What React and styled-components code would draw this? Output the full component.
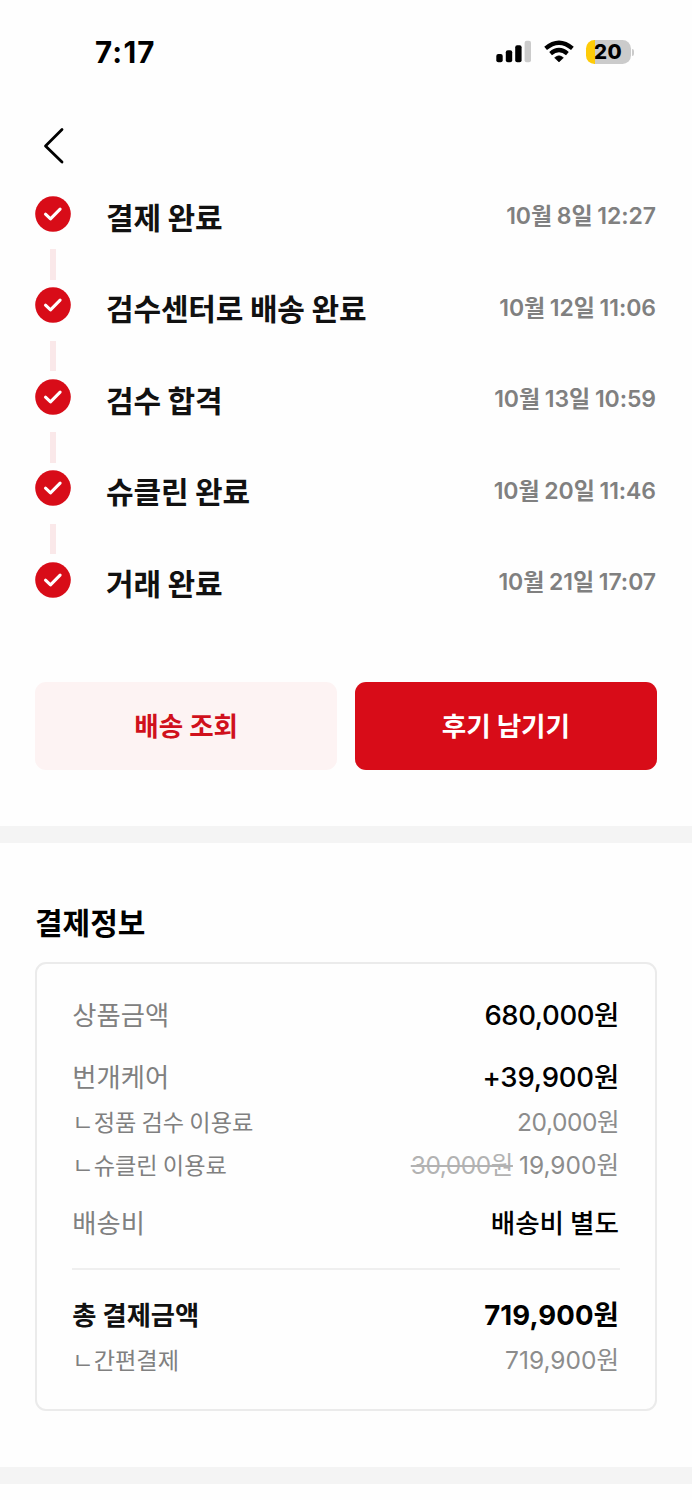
import React from "react";
import styled, { createGlobalStyle } from "styled-components";

const Global = createGlobalStyle`
  * { box-sizing: border-box; }
  body { margin: 0; background: #fefefe; }
`;

const KR = `"Noto Sans CJK KR", "Noto Sans", sans-serif`;
const NUM = `Inter, "Noto Sans CJK KR", sans-serif`;

const Screen = styled.div`
  width: 692px;
  height: 1500px;
  overflow: hidden;
  background: #fefefe;
  color: #111;
  font-family: ${KR};
  white-space: nowrap;
`;

const StatusBar = styled.header`
  display: flex;
  justify-content: space-between;
  align-items: center;
  height: 104px;
  padding: 0 58px 0 95px;
`;

const Clock = styled.div`
  font: 750 29.5px/34px Inter, sans-serif;
  letter-spacing: 1.2px;
  color: #000;
`;

const Indicators = styled.div`
  display: flex;
  align-items: center;
`;

const SignalIcon = styled.svg`
  width: 35px;
  height: 24px;
  margin-right: 13px;
`;

const WifiIcon = styled.svg`
  width: 30px;
  height: 24px;
  margin-right: 12px;
`;

const Battery = styled.div`
  width: 45px;
  height: 24px;
  border-radius: 8.5px;
  background: linear-gradient(to right, #fecb08 9px, #cbcbcb 9px);
  color: #000;
  font: 800 20.5px/24px Inter, sans-serif;
  letter-spacing: 0.4px;
  text-align: center;
`;

const BatteryTip = styled.div`
  width: 2px;
  height: 7px;
  margin-left: 1.5px;
  border-radius: 0 3px 3px 0;
  background: #cbcbcb;
`;

const NavBar = styled.nav`
  height: 91.5px;
  padding: 22px 0 0 40px;
`;

const Chevron = styled.svg`
  display: block;
  width: 28px;
  height: 40px;
`;

const Steps = styled.ol`
  list-style: none;
  margin: 0;
  padding: 0 36px 0 35px;
  height: 486px;
`;

const Step = styled.li`
  display: flex;
  height: 91.5px;
`;

const Marker = styled.div`
  display: flex;
  flex-direction: column;
  align-items: center;
  gap: 17.5px;
  width: 36px;
  margin-right: 35px;
`;

const CheckIcon = styled.svg`
  display: block;
  width: 36px;
  height: 36px;
`;

const Connector = styled.div`
  width: 5.5px;
  height: 30.5px;
  background: #fae8e9;
`;

const StepName = styled.div`
  flex: 1;
  margin-top: 2px;
  font-weight: 600;
  font-size: 30px;
  line-height: 36px;
  letter-spacing: -0.15px;
`;

const StepDate = styled.time`
  margin-top: 2.5px;
  font: 600 23px/36px ${NUM};
  letter-spacing: -0.06px;
  word-spacing: -1px;
  color: #808080;
`;

const Actions = styled.div`
  display: grid;
  grid-template-columns: 1fr 1fr;
  gap: 17.5px;
  padding: 0 35px;
  height: 144.5px;
`;

const Button = styled.button`
  height: 88px;
  padding: 0 0 2px;
  border: 0;
  border-radius: 11px;
  background: ${(p) => (p.$primary ? "#d80c18" : "#fdf3f3")};
  color: ${(p) => (p.$primary ? "#fff" : "#d0101c")};
  font: 600 26.6px/40px ${KR};
`;

const Band = styled.div`
  height: 17px;
  background: #f4f4f4;
`;

const Payment = styled.section`
  height: 624px;
  padding: 59px 35px 0;
`;

const Heading = styled.h2`
  margin: 0;
  height: 60px;
  color: #000;
  font-weight: 700;
  font-size: 30px;
  line-height: 38px;
`;

const Card = styled.div`
  height: 448.5px;
  padding: 29px 35px 0;
  border: 2px solid #ebebeb;
  border-radius: 11px;
`;

const Line = styled.div`
  display: flex;
  justify-content: space-between;
  height: ${(p) => p.$height}px;
  padding: 0 1px 0 0.3px;
  font-size: ${(p) => (p.$sub ? 23.2 : 26.3)}px;
  line-height: 42px;
  font-weight: ${(p) => (p.$bold ? 700 : 400)};
  color: ${(p) => (p.$bold ? "#111" : "#808080")};
`;

const Amount = styled.span`
  margin-top: ${(p) => (p.$text ? 0 : 1)}px;
  font-family: ${(p) => (p.$text ? KR : NUM)};
  font-size: ${(p) => (p.$text ? 26.6 : p.$sub ? 24.5 : 27.5)}px;
  font-weight: ${(p) => (p.$bold ? 700 : p.$sub ? 400 : 500)};
  letter-spacing: ${(p) => p.$track || 0}px;
  color: ${(p) => (p.$sub ? "#8c8c8c" : "#000")};
`;

const Struck = styled.s`
  margin-right: 6px;
  letter-spacing: -0.45px;
  color: #b2b2b2;
`;

const Rule = styled.div`
  height: 1.5px;
  margin-bottom: 23px;
  background: #efefef;
`;

const steps = [
  ["결제 완료", "10월 8일 12:27"],
  ["검수센터로 배송 완료", "10월 12일 11:06"],
  ["검수 합격", "10월 13일 10:59"],
  ["슈클린 완료", "10월 20일 11:46"],
  ["거래 완료", "10월 21일 17:07"],
];

export default function App() {
  return (
    <Screen>
      <Global />
      <StatusBar>
        <Clock>7:17</Clock>
        <Indicators>
          <SignalIcon viewBox="0 0 35 24">
            <rect x="0.3" y="14" width="6.4" height="8.3" rx="2" />
            <rect x="9.8" y="10.2" width="6.4" height="12.1" rx="2" />
            <rect x="19.2" y="5.3" width="6.4" height="17" rx="2" />
            <rect x="28.6" y="0.7" width="6.4" height="21.6" rx="2" fill="#cbcbcb" />
          </SignalIcon>
          <WifiIcon viewBox="0 0 30 24" fill="none" stroke="#000" strokeWidth="4.2">
            <path d="M1.6 8.4Q15-3 28.4 8.4" />
            <path d="M6.6 13.6Q15 6.4 23.4 13.6" />
            <path d="M15 22l-4.4-4.2q4.4-4 8.8 0z" fill="#000" stroke="#000" strokeWidth="0.6" strokeLinejoin="round" />
          </WifiIcon>
          <Battery>20</Battery>
          <BatteryTip />
        </Indicators>
      </StatusBar>
      <NavBar>
        <Chevron viewBox="0 0 28 40" fill="none" stroke="#000" strokeWidth="2.8" strokeLinecap="round" strokeLinejoin="round">
          <path d="M22 3.5L5.5 20L22 36" />
        </Chevron>
      </NavBar>
      <Steps>
        {steps.map(([name, date], i) => (
          <Step key={name}>
            <Marker>
              <CheckIcon viewBox="0 0 36 36">
                <circle cx="18" cy="18" r="17.8" fill="#d80c18" />
                <path d="M10.5 18.2l5 4.6l9.6-9.6" fill="none" stroke="#fff" strokeWidth="3.1" strokeLinecap="round" strokeLinejoin="round" />
              </CheckIcon>
              {i < steps.length - 1 && <Connector />}
            </Marker>
            <StepName>{name}</StepName>
            <StepDate>{date}</StepDate>
          </Step>
        ))}
      </Steps>
      <Actions>
        <Button>배송 조회</Button>
        <Button $primary>후기 남기기</Button>
      </Actions>
      <Band />
      <Payment>
        <Heading>결제정보</Heading>
        <Card>
          <Line $height={61.5}>
            <span>상품금액</span>
            <Amount $track={-0.4}>680,000원</Amount>
          </Line>
          <Line $height={45.5}>
            <span>번개케어</span>
            <Amount $track={-0.2}>+39,900원</Amount>
          </Line>
          <Line $height={42.5} $sub>
            <span>ㄴ정품 검수 이용료</span>
            <Amount $sub $track={-0.45}>20,000원</Amount>
          </Line>
          <Line $height={58.5} $sub>
            <span>ㄴ슈클린 이용료</span>
            <Amount $sub>
              <Struck>30,000원</Struck>19,900원
            </Amount>
          </Line>
          <Line $height={67}>
            <span>배송비</span>
            <Amount $text>배송비 별도</Amount>
          </Line>
          <Rule />
          <Line $height={45.5} $bold>
            <span>총 결제금액</span>
            <Amount $bold $track={0.1}>719,900원</Amount>
          </Line>
          <Line $height={42} $sub>
            <span>ㄴ간편결제</span>
            <Amount $sub>719,900원</Amount>
          </Line>
        </Card>
      </Payment>
      <Band />
    </Screen>
  );
}
